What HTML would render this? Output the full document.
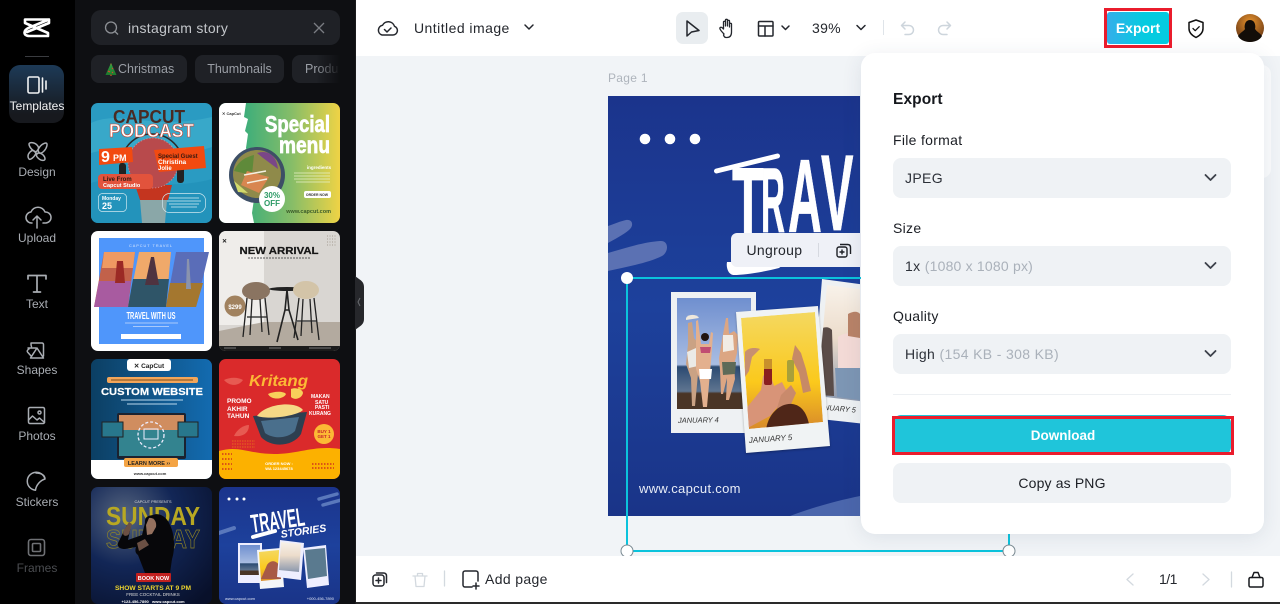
<!DOCTYPE html>
<html><head><meta charset="utf-8"><title>Export</title>
<style>
html,body{margin:0;padding:0;width:1280px;height:604px;overflow:hidden;background:#fff;font-family:"Liberation Sans",sans-serif}
.a{position:absolute;white-space:nowrap}
#root{position:relative;width:1280px;height:604px;overflow:hidden}
.rl{position:absolute;left:0;width:74px;text-align:center;font-size:12px;color:#a9adb3;line-height:14px}
.sel{position:absolute;left:893px;width:338px;height:40px;background:#eff2f5;border-radius:8px}
.lab{position:absolute;left:893px;font-size:14px;color:#1b1e24;letter-spacing:.3px;line-height:16px}
.val{position:absolute;left:905px;font-size:14px;color:#2c3038;letter-spacing:.35px;line-height:16px}
.val i{font-style:normal;color:#aab1ba}
.chip{position:absolute;top:55px;height:28px;background:#1f2126;border-radius:8px;color:#9a9ea5;font-size:12.5px;line-height:28px}
svg text{font-family:"Liberation Sans",sans-serif}
</style></head><body><div id="root">

<!-- dark side -->
<div class="a" style="left:0;top:0;width:75px;height:604px;background:#000"></div>
<div class="a" style="left:75px;top:0;width:280px;height:604px;background:#0e0f12"></div>
<div class="a" style="left:9px;top:65px;width:55px;height:58px;border-radius:11px;background:linear-gradient(180deg,#1d3a57,#17191e 85%)"></div>
<div class="a" style="left:25px;top:56px;width:24px;height:1px;background:#3a3c40"></div>

<div class="a" style="left:91px;top:10px;width:249px;height:35px;background:#1f2126;border-radius:10px"></div>
<div class="a" style="left:128px;top:20px;font-size:14px;color:#c3c6ca;letter-spacing:.3px;line-height:17px">instagram story</div>
<div class="chip" style="left:91px;width:96px"><span style="position:absolute;left:27px;top:0">Christmas</span></div>
<div class="chip" style="left:195px;width:89px;text-align:center">Thumbnails</div>
<div class="chip" style="left:292px;width:48px;overflow:hidden;border-radius:8px 0 0 8px"><span style="position:absolute;left:13px">Produ</span><span style="position:absolute;right:0;top:0;width:24px;height:28px;background:linear-gradient(90deg,rgba(14,15,18,0),#0e0f12)"></span></div>

<div class="rl" style="top:99px;color:#f2f3f4">Templates</div>
<div class="rl" style="top:165px">Design</div>
<div class="rl" style="top:231px">Upload</div>
<div class="rl" style="top:297px">Text</div>
<div class="rl" style="top:363px">Shapes</div>
<div class="rl" style="top:429px">Photos</div>
<div class="rl" style="top:495px">Stickers</div>
<div class="rl" style="top:561px;color:#4b4d51">Frames</div>

<!-- canvas background -->
<div class="a" style="left:356px;top:56px;width:924px;height:500px;background:#f1f4f7"></div>
<div class="a" style="left:608px;top:71px;font-size:12px;color:#aeb4bc;letter-spacing:.3px;line-height:14px">Page 1</div>

<svg class="a" style="left:0;top:0" width="1280" height="604" viewBox="0 0 1280 604" fill="none">
<defs>
<clipPath id="c1"><rect width="121" height="120" rx="7"/></clipPath>
<clipPath id="c2"><rect width="121" height="117" rx="7"/></clipPath>
<linearGradient id="g2" x1="0" x2="1" y1="0" y2="0"><stop offset=".22" stop-color="#3fae7a"/><stop offset=".6" stop-color="#86bd68"/><stop offset="1" stop-color="#efd345"/></linearGradient>
<linearGradient id="g5" x1="0" x2="1" y1="0" y2="0"><stop offset="0" stop-color="#0c3f63"/><stop offset="1" stop-color="#136bb0"/></linearGradient>
<linearGradient id="gb" x1="0" x2="0" y1="0" y2="1"><stop offset="0" stop-color="#1b348c"/><stop offset=".5" stop-color="#1d419c"/><stop offset="1" stop-color="#1a3488"/></linearGradient>
<linearGradient id="gy" x1="0" x2="0" y1="0" y2="1"><stop offset="0" stop-color="#f4d860"/><stop offset=".6" stop-color="#fbc91c"/><stop offset="1" stop-color="#d88a2a"/></linearGradient>
<linearGradient id="gs" x1="0" x2="0" y1="0" y2="1"><stop offset="0" stop-color="#6f8fcf"/><stop offset=".6" stop-color="#a9bde2"/><stop offset=".62" stop-color="#2b4a72"/><stop offset=".84" stop-color="#5f7590"/><stop offset=".86" stop-color="#4a3526"/><stop offset="1" stop-color="#4a3526"/></linearGradient>
<linearGradient id="gl" x1="0" x2="0" y1="0" y2="1"><stop offset="0" stop-color="#f8f2ea"/><stop offset=".45" stop-color="#ecdccb"/><stop offset="1" stop-color="#8a97ad"/></linearGradient>
<radialGradient id="g7" cx=".28" cy=".25" r=".95"><stop offset="0" stop-color="#56657f"/><stop offset=".45" stop-color="#122656"/><stop offset="1" stop-color="#08102a"/></radialGradient>
<linearGradient id="gtree" x1="0" x2="0" y1="0" y2="1"><stop offset="0" stop-color="#e3b53a"/><stop offset=".2" stop-color="#2f9a3f"/><stop offset="1" stop-color="#1c7a2c"/></linearGradient>
<clipPath id="cv"><rect x="608" y="96" width="252" height="420"/></clipPath>
<clipPath id="p1"><rect x="677" y="298" width="74" height="111"/></clipPath>
<clipPath id="p2"><path d="M741 318l74-6 8 110-74 7z"/></clipPath>
<clipPath id="p3"><path d="M827 285l40 5v112l-50-6z"/></clipPath>
<radialGradient id="av" cx=".5" cy=".3" r=".6"><stop offset="0" stop-color="#e8932c"/><stop offset="1" stop-color="#7a4418"/></radialGradient>
</defs>

<!-- rail icons -->
<path d="M25 19.500V23L48 33v3H29.500C26 36 24.500 34.500 24.500 32.500S26 29 29 27.700L49 19.500M25 19.500h24M49 19.500V23L27 32" stroke="#fff" stroke-width="2.600" stroke-linejoin="round" stroke-linecap="round"/>
<g stroke="#f2f3f4" stroke-width="1.600" stroke-linejoin="round" stroke-linecap="round">
<rect x="28" y="77" width="11" height="16" rx="1.500"/><path d="M42.500 78v14M46 81v8"/>
</g>
<g stroke="#a9adb3" stroke-width="1.500" stroke-linejoin="round" stroke-linecap="round">
<path d="M38 150c2-5 6-7 8-7s1 5-2 8-5 3-6-1zM36 152c-5-2-7-6-7-8s5-2 8 1 1 5-1 7zM36 153c-2 5-6 7-7 6s-2-4 1-7 4-1 6 1zM38 153c5 0 7 4 7 6s-4 2-7-1-1-4 0-5z"/>
<path d="M32 223a5.500 5.500 0 0 1-1-11 7.500 7.500 0 0 1 14 0 5.500 5.500 0 0 1 1 11h-3M37 228v-12M33 220l4-4 4 4"/>
<path d="M28 279v-3.500h18V279M37 275.500V292M33.500 292h7" stroke-width="1.700"/>
<path d="M31 343h11a1.500 1.500 0 0 1 1.500 1.500V356M31 343c0 1 0 3 .5 3.500M36 348l-8 0M29 349c-2 1-2 2.500-1.500 3l4 4.500 2.500-4M37 348l6.500 10h-13z"/>
<rect x="28.500" y="407.500" width="16" height="16" rx="1.500"/><path d="M28.500 420l4-4 4.500 4 2.500-2 5 4.500"/><circle cx="39.500" cy="412.500" r="1.500"/>
<path d="M45 479a9 9 0 1 0-9.500 11.200c.5-5 5-10 9.500-11.200zM36 473c5 0 9 2 9 6"/>
</g>
<g stroke="#6f7175" stroke-width="1.600"><rect x="28.500" y="539.500" width="16" height="16" rx="2.500"/><rect x="32.500" y="543.500" width="8" height="8" rx="1"/></g>
<!-- search icons -->
<circle cx="111" cy="27.500" r="5.500" stroke="#8d9095" stroke-width="1.300"/><path d="M115 31.500l3 3" stroke="#8d9095" stroke-width="1.300"/>
<path d="M314 23l10 10M324 23l-10 10" stroke="#7a7d82" stroke-width="1.300"/>
<path d="M111 63l-5.500 12h11z" fill="url(#gtree)"/><rect x="110" y="74.500" width="2" height="1.500" fill="#8a4a20"/><path d="M108 71l2 1M112 68l1 1M112 72l1 1" stroke="#e04030" stroke-width="1"/>

<!-- thumb 1 -->
<svg x="91" y="103" width="121" height="120" viewBox="0 0 121 120"><g clip-path="url(#c1)">
<rect width="121" height="120" fill="#2a9bc2"/><path d="M0 20c30-14 60 8 121-6v30c-40 14-70-8-121 6z" fill="#44b3cf" opacity=".55"/><path d="M0 80c30-10 70 10 121-4v44H0z" fill="#1f8eb5" opacity=".6"/>
<path d="M30 68V62a31 31 0 0 1 62 0v6" stroke="#2b2b2b" stroke-width="1.500"/>
<path d="M44 82h37l-4 15H49z" fill="#c4351f"/><path d="M49 97h27l-2 23H51z" fill="#8aa7a8"/>
<circle cx="62" cy="60" r="25" fill="#b84a4c"/><circle cx="62" cy="60" r="25" stroke="#d98a8a" stroke-width="1" stroke-dasharray="1 2"/>
<rect x="28" y="60" width="7" height="20" rx="3" fill="#222"/><rect x="86" y="60" width="7" height="20" rx="3" fill="#222"/>
<text x="58" y="20" text-anchor="middle" font-size="18" font-weight="700" fill="#4a2a22" textLength="72" lengthAdjust="spacingAndGlyphs">CAPCUT</text>
<text x="60.500" y="34" text-anchor="middle" font-size="18" font-weight="700" fill="#fff" stroke="#c9402c" stroke-width=".6" textLength="85" lengthAdjust="spacingAndGlyphs">PODCAST</text>
<path d="M8 46l33-2 1 15-34 3z" fill="#f24a10"/><text x="10" y="59" font-size="16" font-weight="700" fill="#fff">9</text><text x="22" y="58" font-size="9" font-weight="700" fill="#fff">PM</text>
<path d="M63 47l50-4 2 22-47 4z" fill="#f24a10"/><text x="67" y="55" font-size="6" font-weight="700" fill="#3a1a10">Special Guest</text><text x="67" y="61" font-size="6.500" font-weight="700" fill="#fff">Christina</text><text x="67" y="67" font-size="6" font-weight="700" fill="#fff">Jolie</text>
<rect x="7" y="71" width="55" height="15" rx="4" fill="#e2533c"/><text x="12" y="78" font-size="6" font-weight="700" fill="#2a1a14">Live From</text><text x="12" y="84" font-size="5.500" font-weight="700" fill="#fff">Capcut Studio</text>
<rect x="7.500" y="90.500" width="28" height="18" rx="4" stroke="#cfe8ef" stroke-width=".7"/><text x="11" y="97" font-size="5" fill="#fff" font-weight="700">Monday</text><text x="11" y="106" font-size="9" fill="#fff" font-weight="700">25</text>
<rect x="71.500" y="90.500" width="43" height="19" rx="7" stroke="#cfe8ef" stroke-width=".7"/><path d="M78 95h30M76 98h34M78 101h30M80 104h26" stroke="#d8eef3" stroke-width=".8"/>
</g></svg>

<!-- thumb 2 -->
<svg x="219" y="103" width="121" height="120" viewBox="0 0 121 120"><g clip-path="url(#c1)">
<rect width="121" height="120" fill="url(#g2)"/>
<path d="M0 0h27l-2 14 4 2-3 12 3 3-2 14 3 10-1 15 4 6-2 14 4 6-2 14 2 10H0z" fill="#fff"/>
<text x="111" y="29" text-anchor="end" font-size="23" font-weight="700" fill="#fff" stroke="#fff" stroke-width=".7" textLength="65" lengthAdjust="spacingAndGlyphs">Special</text>
<text x="111" y="50" text-anchor="end" font-size="23" font-weight="700" fill="#fff" stroke="#fff" stroke-width=".7" textLength="51" lengthAdjust="spacingAndGlyphs">menu</text>
<circle cx="38" cy="72" r="28" fill="#3d4f66"/><circle cx="38" cy="71" r="24" fill="#8f8a4a"/>
<path d="M38 50c12-4 20 4 21 16-8-6-14-10-21-16z" fill="#7a4688"/><path d="M15 68c4-10 12-14 20-16l-2 20z" fill="#5f8a3a"/><path d="M28 68l22 6-10 16-18-8z" fill="#d88650"/><path d="M25 72l22-4M28 80l20-4" stroke="#f4efe0" stroke-width="1.500"/><path d="M15 78l14 12-10-1z" fill="#d2da6c"/>
<circle cx="53" cy="96" r="13" fill="#fff"/><text x="53" y="95" text-anchor="middle" font-size="8" font-weight="700" fill="#2d9a66">30%</text><text x="53" y="103" text-anchor="middle" font-size="8" font-weight="700" fill="#2d9a66">OFF</text>
<text x="100" y="66" font-size="4.500" font-weight="700" fill="#fff" text-anchor="middle">ingredients</text>
<path d="M75 70h36M75 73h36M75 76h36M77 79h34" stroke="#e6f1c8" stroke-width=".8"/>
<rect x="85" y="88" width="27" height="7" rx="2" fill="#fff"/><text x="98" y="93" font-size="3.500" font-weight="700" text-anchor="middle" fill="#333">ORDER NOW</text>
<text x="112" y="110" text-anchor="end" font-size="5.500" font-weight="700" fill="#3a5a2a">www.capcut.com</text>
<text x="3" y="12" font-size="4" fill="#333" font-weight="700">✕ CapCut</text>
</g></svg>

<!-- thumb 3 -->
<svg x="91" y="231" width="121" height="120" viewBox="0 0 121 120"><g clip-path="url(#c1)">
<rect width="121" height="120" fill="#fff"/><rect x="8" y="7" width="105" height="106" fill="#4f96fb"/>
<text x="60" y="16" font-size="3.800" letter-spacing="1" fill="#dce9fd" text-anchor="middle">CAPCUT TRAVEL</text>
<path d="M13 21h31L37 76H3z" fill="#c2614a"/><path d="M8 50h32l-3 26H3z" fill="#a85ba0"/><path d="M13 21h31l-2 16H11z" fill="#ef9a62"/><path d="M26 30h6l2 22h-10z" fill="#9b2a25"/>
<path d="M48 21h32l-5 55H37z" fill="#f0a96a"/><path d="M42 48h36l-3 28H37z" fill="#2f5568"/><path d="M60 26h3l5 28H54z" fill="#4f3340"/>
<path d="M85 21h33L105 76H75z" fill="#5a6db8"/><path d="M79 52h33l-7 24H75z" fill="#a4772f"/><path d="M96 28h2l2 30h-5z" fill="#8a93ad"/>
<text x="60" y="88" font-size="10" font-weight="700" fill="#fff" text-anchor="middle" textLength="49" lengthAdjust="spacingAndGlyphs">TRAVEL WITH US</text>
<path d="M34 92h53M42 95.500h36" stroke="#c8dcfb" stroke-width=".8"/>
<rect x="30" y="103" width="60" height="5" fill="#fff"/>
</g></svg>

<!-- thumb 4 -->
<svg x="219" y="231" width="121" height="120" viewBox="0 0 121 120"><g clip-path="url(#c1)">
<rect width="121" height="120" fill="#d9d6d2"/><rect width="45" height="94" fill="#efedea"/><path d="M0 100L45 91h76v24H0z" fill="#b3aa9f"/>
<rect y="115" width="121" height="5" fill="#1b1b1b"/>
<text x="60" y="23" font-size="10.500" font-weight="700" fill="#161616" stroke="#161616" stroke-width=".25" text-anchor="middle" textLength="79" lengthAdjust="spacingAndGlyphs">NEW ARRIVAL</text>
<path d="M29 27h62" stroke="#555" stroke-width="1" stroke-dasharray="2 1"/>
<text x="3" y="12" font-size="6" font-weight="700" fill="#222">✕</text>
<circle cx="16" cy="75" r="10.500" fill="#a1825f"/><text x="16" y="78" font-size="6" font-weight="700" fill="#fff" text-anchor="middle">$299</text>
<ellipse cx="37" cy="60" rx="14" ry="9" fill="#8a7461"/><path d="M28 67l-4 39M46 67l4 37M33 68l-2 36M41 68l2 33M28 86h20" stroke="#222" stroke-width="1.300"/>
<ellipse cx="68" cy="58" rx="18" ry="2" fill="#222"/><path d="M68 59l-2 20-8 32M68 59l2 20 9 30M66 79h4" stroke="#222" stroke-width="1.600"/>
<ellipse cx="87" cy="59" rx="13" ry="9" fill="#d3c4a8"/><path d="M80 67l-5 40M95 67l5 42M84 68l-2 37M91 68l2 34M78 90h20" stroke="#222" stroke-width="1.300"/>
<path d="M108 5h10M108 8h10M108 11h10M108 14h10" stroke="#b0a89e" stroke-width="1.200" stroke-dasharray="1 1.500"/>
<path d="M5 117h12M50 117h12M90 117h22" stroke="#999" stroke-width=".8"/>
</g></svg>

<!-- thumb 5 -->
<svg x="91" y="359" width="121" height="120" viewBox="0 0 121 120"><g clip-path="url(#c1)">
<rect width="121" height="120" fill="url(#g5)"/><rect y="101" width="121" height="19" fill="#fff"/>
<rect x="36" y="0" width="44" height="12" rx="3" fill="#fff"/><text x="58" y="9" font-size="6.500" font-weight="700" fill="#222" text-anchor="middle">✕ CapCut</text>
<rect x="16" y="18" width="91" height="6" rx="2" fill="#f3a65a"/><path d="M20 21h82" stroke="#7a4a1a" stroke-width="1"/>
<text x="61" y="36" font-size="10.500" font-weight="700" fill="#fff" stroke="#fff" stroke-width=".2" text-anchor="middle" textLength="102" lengthAdjust="spacingAndGlyphs">CUSTOM WEBSITE</text>
<path d="M30 41h62M36 45h50" stroke="#b9d7ec" stroke-width=".9"/>
<rect x="26" y="54" width="69" height="46" rx="2" fill="#1b2230"/><rect x="28" y="56" width="65" height="41" fill="#33838f"/><rect x="28" y="56" width="65" height="15" fill="#d08d5f"/><circle cx="60" cy="76" r="13" stroke="#eef" stroke-width="1.300" stroke-dasharray="3 2"/><rect x="53" y="70" width="14" height="10" stroke="#eef" stroke-width="1"/>
<rect x="11" y="63" width="21" height="15" fill="#28778c" stroke="#222"/><rect x="87" y="63" width="20" height="15" fill="#28778c" stroke="#222"/>
<rect x="33" y="99" width="54" height="9" rx="2" fill="#f4a445"/><text x="58" y="106" font-size="5.500" font-weight="700" fill="#222" text-anchor="middle">LEARN MORE ››</text>
<text x="59" y="116" font-size="4" font-weight="700" fill="#333" text-anchor="middle">www.capcut.com</text>
</g></svg>

<!-- thumb 6 -->
<svg x="219" y="359" width="121" height="120" viewBox="0 0 121 120"><g clip-path="url(#c1)">
<rect width="121" height="120" fill="#da2a2b"/><path d="M0 92c20-6 30 3 55 3s40-9 66-5v30H0z" fill="#fcb100"/>
<path d="M5 21c6-3 14-3 19 0-4 6-13 7-19 0z" fill="#e75a52"/><path d="M15 77c3-7 10-11 15-11 0 8-6 12-15 11z" fill="#e75a52"/>
<text x="30" y="27" font-size="16" font-style="italic" font-weight="700" fill="#fcb935" textLength="59" lengthAdjust="spacingAndGlyphs">Kritang</text>
<path d="M49 35c6-3 16-3 18 0-2 5-14 7-18 0zM72 30c4-2 12 0 12 4-1 5-8 8-12 4z" fill="#f8d05a"/>
<text x="8" y="44" font-size="6.500" font-weight="700" fill="#fff">PROMO</text><text x="8" y="52" font-size="6.500" font-weight="700" fill="#fff">AKHIR</text><text x="8" y="59" font-size="6.500" font-weight="700" fill="#fff">TAHUN</text>
<text x="92" y="39" font-size="5" font-weight="700" fill="#fff">MAKAN</text><text x="96" y="45" font-size="5" font-weight="700" fill="#fff">SATU</text><text x="96" y="50" font-size="5" font-weight="700" fill="#fff">PASTI</text><text x="90" y="56" font-size="5" font-weight="700" fill="#fff">KURANG</text>
<path d="M34 57l54-4-6 22c-8 13-30 14-40 3z" fill="#2e3f50"/><path d="M42 62l38-4-4 14c-8 8-22 8-30 2z" fill="#4a6f8c"/><path d="M38 57c8-12 38-16 46-6-6 6-34 10-46 6z" fill="#f5d986"/>
<circle cx="105" cy="75" r="10" fill="#fcb935"/><text x="105" y="74" font-size="4.500" font-weight="700" fill="#c8252a" text-anchor="middle">BUY 1</text><text x="105" y="79" font-size="4.500" font-weight="700" fill="#c8252a" text-anchor="middle">GET 1</text>
<text x="60" y="106" font-size="4" font-weight="700" fill="#fff" text-anchor="middle">ORDER NOW :</text><text x="60" y="111" font-size="4" font-weight="700" fill="#fff" text-anchor="middle">WA 123445678</text>
<path d="M13 82h23M13 85h23M13 88h23" stroke="#e66b1c" stroke-width="1" stroke-dasharray="1.500 1"/><path d="M3 95h10M3 100h10M3 105h10M3 110h10" stroke="#d2361c" stroke-width="1.500" stroke-dasharray="1.500 1.500"/><path d="M93 105h22M93 109h22" stroke="#d2361c" stroke-width="1.500" stroke-dasharray="1.500 1.500"/>
</g></svg>

<!-- thumb 7 -->
<svg x="91" y="487" width="121" height="117" viewBox="0 0 121 117"><g clip-path="url(#c2)">
<rect width="121" height="117" fill="url(#g7)"/>
<text x="62" y="38" font-size="26" font-weight="700" fill="#b8a822" text-anchor="middle" textLength="94" lengthAdjust="spacingAndGlyphs">SUNDAY</text>
<text x="62" y="61" font-size="26" font-weight="700" fill="none" stroke="#8f8426" stroke-width=".7" text-anchor="middle" textLength="94" lengthAdjust="spacingAndGlyphs">SUNDAY</text>
<text x="62" y="16" font-size="3.800" fill="#ddd" text-anchor="middle">CAPCUT PRESENTS</text>
<path d="M62 28c6-3 14 2 17 10 5 10 5 25 2 34l-2 14H54l-7-18c-3-2-3-5-2-8l-11 2c-5 0-8-2-7-6l9-18 4 1-3 14 14-5 3-12c0-4 0-7 8-8z" fill="#07070a"/><path d="M58 31c5-1 8 4 7 9l-4 7-5 1-1-10z" fill="#94705e"/><path d="M33 43l5-8 3 2-3 10c-2 3-8 3-5-4zM46 56l8-4 4 6-10 6z" fill="#6b5044"/>
<rect x="45" y="86" width="35" height="9" rx="1" fill="#c1201f"/><text x="62.500" y="93" font-size="5.500" font-weight="700" fill="#fff" text-anchor="middle">BOOK NOW</text>
<text x="62" y="103" font-size="6.500" font-weight="700" fill="#eed52e" text-anchor="middle" textLength="76" lengthAdjust="spacingAndGlyphs">SHOW STARTS AT 9 PM</text>
<text x="62" y="109" font-size="4.500" fill="#ddd" text-anchor="middle">FREE COCKTAIL DRINKS</text>
<text x="62" y="116" font-size="4" font-weight="700" fill="#fff" text-anchor="middle">+123-456-7890 &#160; www.capcut.com</text>
</g></svg>

<!-- thumb 8 -->
<svg x="219" y="487" width="121" height="117" viewBox="0 0 121 117"><g clip-path="url(#c2)">
<rect width="121" height="117" fill="url(#gb)"/>
<circle cx="10" cy="12" r="1.500" fill="#fff"/><circle cx="18" cy="12" r="1.500" fill="#fff"/><circle cx="25" cy="12" r="1.500" fill="#fff"/>
<path d="M100 12l18-5M104 18l18-5" stroke="#5a78bc" stroke-width="3.500" stroke-linecap="round"/><path d="M0 46l15-5" stroke="#5a78bc" stroke-width="4" stroke-linecap="round"/>
<g transform="rotate(-8 60 35)"><text x="32" y="42" font-size="26" font-weight="700" fill="#fff" textLength="54" lengthAdjust="spacingAndGlyphs">TRAVEL</text><text x="60" y="51" font-size="10.500" font-style="italic" font-weight="700" fill="#fff">STORIES</text></g>
<path d="M34 50l22-6" stroke="#fff" stroke-width="4" stroke-linecap="round"/>
<rect x="19" y="56" width="24" height="40" fill="#eef"/><rect x="21" y="58" width="20" height="30" fill="url(#gs)"/>
<path d="M38 63l24-2 3 39-24 2z" fill="#f4f6f8"/><path d="M40 65l20-2 2 29-20 2z" fill="url(#gy)"/><path d="M42 92l6-14c3-5 9-5 12 0l2 14z" fill="#a85a46"/>
<path d="M61 53l24 3-3 37-24-3z" fill="#eef"/><path d="M62 55l20 2-2 28-20-2z" fill="url(#gl)"/>
<path d="M84 61l23-3 3 40-22 3z" fill="#eef"/><path d="M86 63l20-2 2 28-19 3z" fill="#5a7a8f"/>
<text x="6" y="113" font-size="4" fill="#dfe6f6">www.capcut.com</text><text x="115" y="113" font-size="4" fill="#dfe6f6" text-anchor="end">+000-456-7890</text>
</g></svg>

<rect x="355" y="0" width="1" height="604" fill="#1a1a1c"/>
<!-- panel handle -->
<path d="M355 276l4 3c3 2 5 4 5 8v32c0 4-2 6-5 8l-4 3z" fill="#26272b"/>
<path d="M360 298l-2 4 2 4" stroke="#6a6c70" stroke-width="1"/>

<!-- main canvas artwork -->
<g clip-path="url(#cv)">
<rect x="608" y="96" width="252" height="420" fill="url(#gb)"/>
<circle cx="645" cy="139" r="5.300" fill="#fff"/><circle cx="670" cy="139" r="5.300" fill="#fff"/><circle cx="695" cy="139" r="5.300" fill="#fff"/>
<path d="M608 226c6-2 13-5 18-6 7-1 8 6 3 10-6 5-14 9-21 13zM608 253c17-5 36-11 52-12 9-1 9 11 2 15-14 7-36 11-54 15z" fill="#5b71b3"/>
<g fill="#fff" stroke="#fff" stroke-width=".8" font-weight="700">
<text font-size="104" transform="translate(732 240) scale(.5 1)">T</text>
<text font-size="92" transform="translate(761 232) scale(.36 1)">R</text>
<text font-size="104" transform="translate(788 232) scale(.45 1)">A</text>
<text font-size="108" transform="translate(821 230) scale(.45 1)">V</text>
<text font-size="108" transform="translate(857 226) scale(.45 1)">E</text>
</g>
<path d="M716.500 171l61-15" stroke="#fff" stroke-width="5" stroke-linecap="round"/>
<path d="M727 262h60l-8 6c-15 4-35 7-45 7-6 0-8-8-7-13z" fill="#fff"/>

<!-- photo 3 -->
<path d="M822 279l44 6v139l-55-6z" fill="#eef1f3"/>
<g clip-path="url(#p3)"><rect x="815" y="285" width="50" height="118" fill="url(#gl)"/>
<path d="M818 332c4-6 11-6 14-2l2 66-17-1z" fill="#5a4c48"/><path d="M838 337c6-5 16-5 22 0v32l-22 1z" fill="#f3dad6"/><path d="M835 368h25v32l-23-3z" fill="#7d96b4"/><path d="M848 314c5-3 10-3 12 0v24l-12-2z" fill="#b98368"/></g>
<text x="815" y="409" font-size="7.500" font-style="italic" fill="#333" transform="rotate(5 815 409)">JANUARY 5</text>
<!-- photo 1 -->
<rect x="671" y="292" width="85" height="141" fill="#eef1f3"/>
<g clip-path="url(#p1)"><rect x="677" y="298" width="74" height="111" fill="url(#gs)"/>
<path d="M688 323l4-1 2 16 5 6-1 30-3 32h-3l-1-28-5-14 2-20z" fill="#caa284"/><path d="M687 352l9-4 2 18-9 2z" fill="#ebeae6"/>
<path d="M696 321l2-1 3 24h8l2-12 2 1-1 16-2 24-3 34h-4l-3-26-4-12z" fill="#e3b08e"/><path d="M699 369h13l-1 10h-11z" fill="#fff"/><path d="M700 347h11l-1 6h-9z" fill="#c14d72"/><circle cx="705" cy="337" r="4" fill="#20130f"/>
<path d="M726 318l2 0 1 16 5-3 4 4-1 18-3 12 1 14-6 21h-3l1-22-4 16h-2l-1-24-1-12 3-18z" fill="#dca683"/><path d="M722 362h14l-1 12-12 1z" fill="#5d6a58"/><path d="M723 335h10l1 15-11 2z" fill="#f1ece5"/>
<path d="M686 318a7 5 0 0 1 13 0l-13 2z" fill="#efe8dc"/></g>
<text x="678" y="423" font-size="7.500" font-style="italic" fill="#333" transform="rotate(-1 678 423)">JANUARY 4</text>
<!-- photo 2 -->
<path d="M736 312l82-6 12 140-84 7z" fill="#f0f3f4" filter="drop-shadow(0 1px 1px rgba(0,0,0,.3))"/>
<g clip-path="url(#p2)"><path d="M741 318l74-6 8 110-74 7z" fill="url(#gy)"/>
<path d="M745 352c3-4 9-5 15-3l-8 8-3 14-4 6z" fill="#c78f70"/><path d="M745 410l16-20 2-14c3-3 6-2 8 0l3 10 8-4 6 12-18 22-26 14z" fill="#d89478"/>
<path d="M795 345l6 8 5 16 5 22-8 2-4-20-7-14z" fill="#c78a66"/><path d="M781 395l10-10 5 8-9 20-14 8z" fill="#c98a6c"/>
<rect x="764" y="359" width="8" height="26" rx="2" fill="#8a1f1f"/><rect x="764" y="359" width="8" height="10" fill="#c8902c"/><rect x="787" y="360" width="7" height="22" rx="2" fill="#a8a03a"/>
<path d="M766 430c2-16 14-27 26-26 10 1 16 10 18 26z" fill="#4f2618"/></g>
<text x="749" y="443" font-size="8" font-style="italic" fill="#333" transform="rotate(-4 749 443)">JANUARY 5</text>
<text x="639" y="493" font-size="13" fill="#e8edf7" letter-spacing=".3">www.capcut.com</text>
<path d="M790 516c20-8 50-16 70-20v20z" fill="#4b66ac"/>
</g>

<!-- selection -->
<path d="M627 278H1009M627 278V551H1009V278" stroke="#0bc3dc" stroke-width="2"/>
<circle cx="627" cy="278" r="6" fill="#fff"/>
<circle cx="627" cy="551" r="6" fill="#fff" stroke="#7a8a92" stroke-width="1"/>
<circle cx="1009" cy="551" r="6" fill="#fff" stroke="#7a8a92" stroke-width="1"/>
<!-- context bar -->
<rect x="731" y="233" width="135" height="34" rx="6" fill="#eff1f7"/>
<text x="746.500" y="255" font-size="14" fill="#23262c" letter-spacing=".3">Ungroup</text>
<path d="M818.500 243v14" stroke="#d6d9e0"/>
<g stroke="#1f2126" stroke-width="1.400" stroke-linejoin="round"><rect x="837" y="247" width="10" height="10" rx="2"/><path d="M840 244.500h7.500c2 0 3 1 3 3V254M842 249.500v5M839.500 252h5"/></g>
</svg>

<!-- bottom + top bars -->
<div class="a" style="left:356px;top:0;width:924px;height:56px;background:#fff"></div>
<div class="a" style="left:356px;top:556px;width:924px;height:46px;background:#fff"></div>
<div class="a" style="left:356px;top:602px;width:924px;height:2px;background:#2a2a2a"></div>

<!-- behind-panel card -->
<div class="a" style="left:1245px;top:65px;width:26px;height:113px;background:#fbfcfd;border-radius:0 9px 9px 0"></div>

<!-- popup -->
<div class="a" style="left:861px;top:53px;width:403px;height:481px;background:#fff;border-radius:14px;box-shadow:0 3px 20px rgba(40,60,90,.10)"></div>
<div class="a" style="left:893px;top:91px;font-size:15.500px;font-weight:700;color:#14171c;letter-spacing:.1px;line-height:18px">Export</div>
<div class="lab" style="top:132px">File format</div>
<div class="sel" style="top:158px"></div>
<div class="val" style="top:170px">JPEG</div>
<div class="lab" style="top:220px">Size</div>
<div class="sel" style="top:246px"></div>
<div class="val" style="top:258px">1x <i style="letter-spacing:.2px">(1080 x 1080 px)</i></div>
<div class="lab" style="top:308px">Quality</div>
<div class="sel" style="top:334px"></div>
<div class="val" style="top:346px">High <i>(154 KB - 308 KB)</i></div>
<div class="a" style="left:893px;top:394px;width:338px;height:1px;background:#edf0f3"></div>
<div class="a" style="left:893px;top:415px;width:338px;height:40px;background:#1fc5da;border-radius:8px"></div>
<div class="a" style="left:892px;top:416px;width:336px;height:33px;border:3px solid #ea1c2c;text-align:center;color:#fff;font-size:13.500px;font-weight:700;line-height:33px">Download</div>
<div class="a" style="left:893px;top:463px;width:338px;height:40px;background:#eff2f5;border-radius:8px;text-align:center;color:#1b1e24;font-size:14px;line-height:40px;letter-spacing:.15px">Copy as PNG</div>

<!-- top bar text -->
<div class="a" style="left:414px;top:20px;font-size:14px;color:#24272d;letter-spacing:.45px;line-height:17px">Untitled image</div>
<div class="a" style="left:676px;top:12px;width:32px;height:32px;background:#e9edf0;border-radius:7px"></div>
<div class="a" style="left:812px;top:20px;font-size:14px;color:#24272d;letter-spacing:.3px;line-height:17px">39%</div>
<div class="a" style="left:1104px;top:8px;width:62px;height:34px;border:3px solid #ea1c2c;background:#fff"></div>
<div class="a" style="left:1107px;top:12px;width:62px;height:32px;background:linear-gradient(90deg,#35aeea,#04cbe0 60%);border-radius:3px;text-align:center;color:#fff;font-size:14px;font-weight:700;line-height:32px">Export</div>

<!-- bottom text -->
<div class="a" style="left:485px;top:571px;font-size:14px;color:#24272d;letter-spacing:.35px;line-height:17px">Add page</div>
<div class="a" style="left:1159px;top:571px;font-size:14px;color:#24272d;letter-spacing:-.5px;line-height:17px">1/1</div>

<!-- toolbar & popup icons -->
<svg class="a" style="left:0;top:0;pointer-events:none" width="1280" height="604" viewBox="0 0 1280 604" fill="none">
<g stroke="#24272d" stroke-width="1.500" stroke-linecap="round" stroke-linejoin="round">
<path d="M384 35h9a4.500 4.500 0 0 0 1.500-8.700 6.500 6.500 0 0 0-12-1 5 5 0 0 0-.5 9.700zM384.500 29.500l2.500 2.500 4-4"/>
<path d="M525 25l4 4 4-4"/>
<path d="M687 21l0 15 4.500-4 7.500-1.500z"/>
<path d="M724 34c-2-2-3.500-4-4-5-.5-1.500 1-2.500 2.500-1l1 1v-7c0-1 2-1 2 0v4-6c0-1 2-1 2 0v6-5c0-1 2-1 2 0v6-3c0-1 2-1 2 0v8c0 4-2 5.500-4.500 5.500h-1c-1 0-2-1-2.500-2.500z" stroke-width="1.300"/>
<rect x="758.500" y="21.500" width="14.500" height="14.500" rx="1"/><path d="M758.500 26h14.500M765 26v10"/>
<path d="M782 26l3.500 3.500 3.500-3.500M857 25.500l4 4 4-4"/>
</g>
<path d="M883.500 20v15" stroke="#dfe4e9" stroke-width="1"/>
<g stroke="#cdd5dc" stroke-width="1.500" stroke-linecap="round" stroke-linejoin="round">
<path d="M905 22l-3.500 3.500 3.500 3.500M902 25.500h7a4.500 4.500 0 0 1 0 9h-4M947 22l3.500 3.500-3.500 3.500M950 25.500h-7a4.500 4.500 0 0 0 0 9h4"/>
</g>
<g stroke="#111" stroke-width="1.500" stroke-linejoin="round" stroke-linecap="round"><path d="M1196 20l7 2.500v6c0 4.500-3 7-7 9-4-2-7-4.500-7-9v-6z"/><path d="M1193 28.500l2.200 2.200 4-4" stroke-width="1.300"/></g>
<circle cx="1250" cy="28" r="14" fill="url(#av)"/><path d="M1238 36c3-4 6-5 7-7-1-3 0-9 5-9s6 6 5 9c2 3 5 4 7 7-2 4-7 6-12 6s-10-2-12-6z" fill="#130d08"/>
<g stroke="#3d424b" stroke-width="1.800" stroke-linecap="round" stroke-linejoin="round"><path d="M1205.500 175l5 5 5-5M1205.500 263l5 5 5-5M1205.500 351l5 5 5-5"/></g>
<!-- bottom -->
<g stroke="#24272d" stroke-width="1.500" stroke-linecap="round" stroke-linejoin="round">
<rect x="373" y="575" width="11" height="11" rx="2.500"/><path d="M376.500 573h7c2 0 3 1 3 3v6.500M378.500 578v5M376 580.500h5"/>
<path d="M472 587h-7a2 2 0 0 1-2-2v-12a2 2 0 0 1 2-2h11a2 2 0 0 1 2 2v8M476 583v6M473 586h6"/>
</g>
<g stroke="#d3d9df" stroke-width="1.300" stroke-linecap="round" stroke-linejoin="round"><path d="M413 576h14M417.500 576v-2.500h5v2.500M415 576l1 10.500h8l1-10.500M444.500 571v15"/></g>
<g stroke="#d3d9df" stroke-width="1.300" stroke-linecap="round" stroke-linejoin="round"><path d="M1133 574l-6 5.500 6 5.500M1203 574l6 5.500-6 5.500M1231.500 572v15"/></g>
<g stroke="#17191d" stroke-width="1.500" stroke-linecap="round" stroke-linejoin="round"><rect x="1249" y="577.500" width="14" height="9.500" rx="1.500"/><path d="M1252 577.500l2-5h4l2 5"/></g>
</svg>
</div></body></html>
